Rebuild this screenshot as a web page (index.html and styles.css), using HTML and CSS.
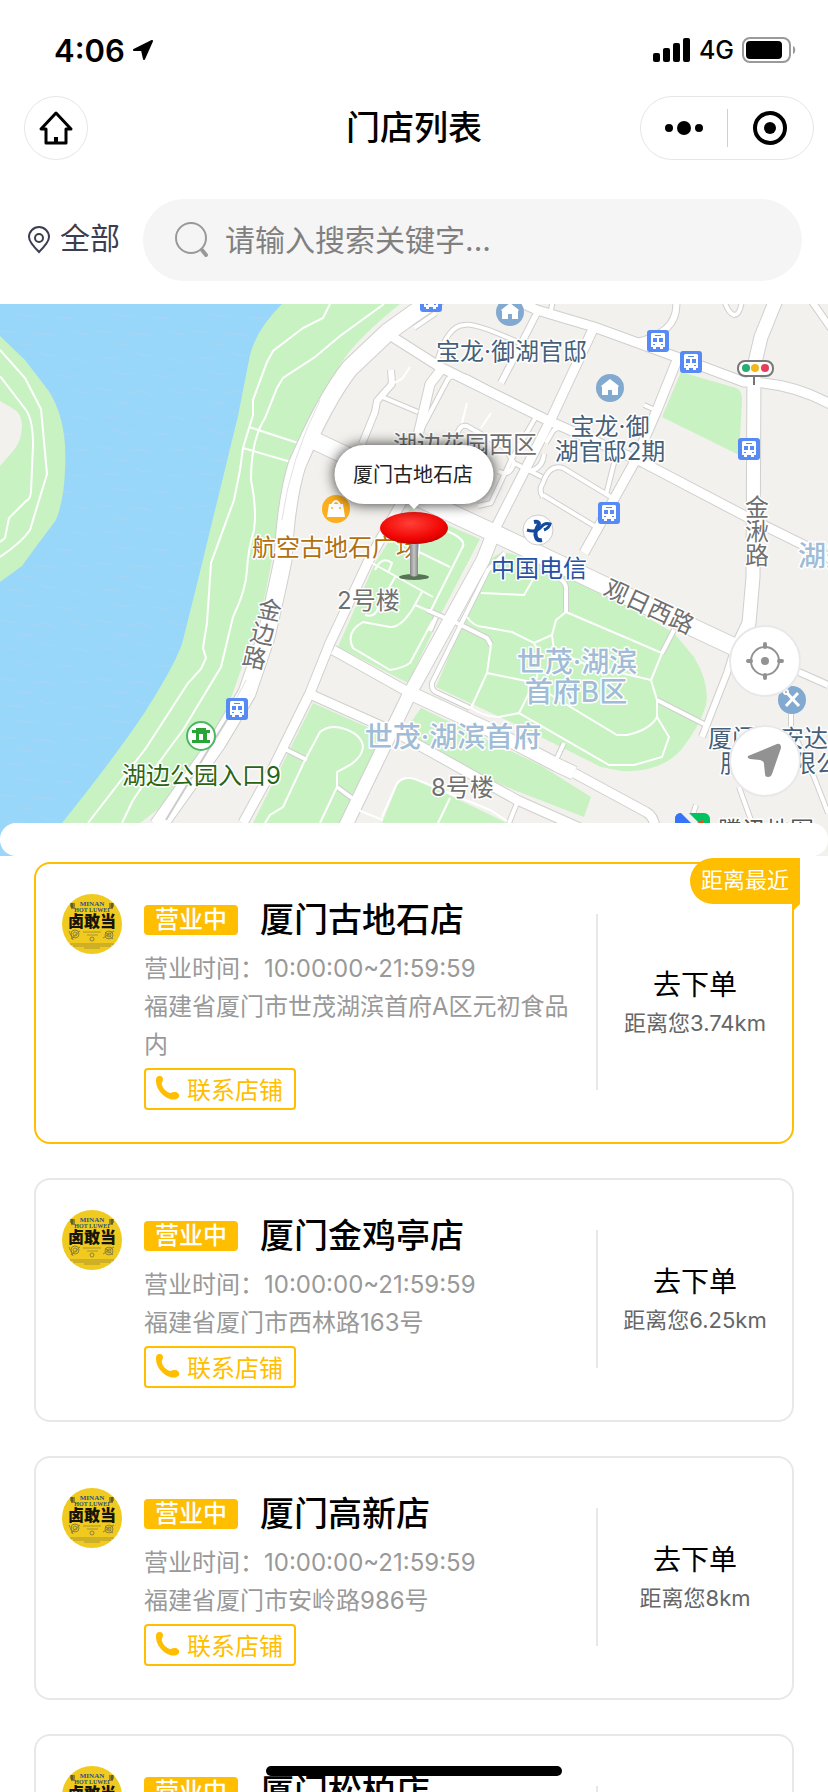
FILE: index.html
```html
<!DOCTYPE html>
<html lang="zh-CN">
  <head>
    <meta charset="utf-8">
    <meta name="viewport" content="width=device-width, initial-scale=1">
    <title>门店列表</title>
    <link rel="stylesheet" href="styles.css">
  </head>
  <body>
    <svg class="sprites" aria-hidden="true">
      <symbol id="logo" viewBox="0 0 60 60">
        <circle cx="30" cy="30" r="30" fill="#f1ca20"/>
        <g text-anchor="middle" font-family="Liberation Serif, serif" font-weight="700" font-size="7" fill="#29517f">
          <text x="30" y="12">MINAN</text>
          <text x="30" y="18" font-size="6">HOT LUWEI</text>
        </g>
        <path d="M8 10h5M8 12h5M9 14h4M10 9v5M47 10h5M47 12h5M47 14h4M50 9v5" stroke="#3b3a20" fill="none"/>
        <text x="30" y="33" text-anchor="middle" font-family="Noto Sans CJK SC, sans-serif" font-weight="900" font-size="16" fill="#15150c">卤敢当</text>
        <g fill="none" stroke="#8c8235">
          <circle cx="13" cy="40" r="4"/><circle cx="13" cy="40" r="2"/><path d="M7 37l4 9M9 45l9-8"/>
          <circle cx="47" cy="41" r="4"/><circle cx="47" cy="41" r="2"/><path d="M41 44l11-7M43 38l8 7"/>
          <circle cx="30" cy="45" r="2"/>
          <path d="M21 38h18M25 41h11M8 50h44M11 52h38M22 54h16" stroke-width=".7"/>
        </g>
      </symbol>
      <symbol id="phone" viewBox="0 0 24 24">
        <path fill="currentColor" d="M1 1C3-1 7 0 7 3c0 3-2 4-1 6 1 4 5 7 8 8 2 0 2-1 5-1 3 0 5 3 4 5-2 3-6 3-9 2C7 21 0 13 0 5c0-2 0-3 1-4z"/>
      </symbol>
      <symbol id="bus" viewBox="0 0 22 22">
        <rect width="22" height="22" rx="3" fill="#568af5"/>
        <path fill="#fff" d="M5 3h12l1 1v13h-2v2h-3v-2H9v2H6v-2H4V4z"/>
        <path fill="#568af5" d="M8 5h6v1H8zM6 8h4v4H6zM12 8h4v4h-4zM6 14h2v1H6zM14 14h2v1h-2z"/>
      </symbol>
      <symbol id="house" viewBox="0 0 28 28">
        <circle cx="14" cy="14" r="14" fill="#82a9cf"/>
        <path fill="#fff" d="M14 5l9 7-1 1v8h-6v-5h-4v5H6v-8l-1-1z"/>
      </symbol>
    </svg>

    <div class="status">
      <span class="time">4:06</span>
      <svg class="arrow" viewBox="0 0 22 22"><path d="M20 2L2 11h8l2 9z" stroke="#000" stroke-width="2" stroke-linejoin="round"/></svg>
      <span class="status-right">
        <svg width="38" height="24" viewBox="0 0 38 24"><rect y="15" width="7" height="9" rx="2"/><rect x="10" y="10" width="7" height="14" rx="2"/><rect x="20" y="5" width="7" height="19" rx="2"/><rect x="30" width="7" height="24" rx="2"/></svg>
        <span>4G</span>
        <svg width="54" height="26" viewBox="0 0 54 26"><rect x="1" y="1" width="47" height="24" rx="7" fill="none" stroke="#9a9a9a" stroke-width="2"/><rect x="4" y="4" width="36" height="18" rx="4"/><path d="M51 9c3 1 3 7 0 8z" fill="#9a9a9a"/></svg>
      </span>
    </div>

    <header class="nav">
      <button class="home" aria-label="首页">
        <svg width="36" height="36" viewBox="0 0 36 36" fill="none" stroke="#000" stroke-width="3" stroke-linejoin="round"><path d="M18 3L3 19h5v14h20V19h5z"/><path d="M18 27v5" stroke-width="4"/></svg>
      </button>
      <h1>门店列表</h1>
      <div class="capsule">
        <button aria-label="更多"><svg width="38" height="20" viewBox="0 0 38 20"><circle cx="4" cy="10" r="4"/><circle cx="19" cy="10" r="7"/><circle cx="34" cy="10" r="4"/></svg></button>
        <button aria-label="关闭"><svg width="36" height="36" viewBox="0 0 36 36"><circle cx="18" cy="18" r="15" fill="none" stroke="#000" stroke-width="4"/><circle cx="18" cy="18" r="6"/></svg></button>
      </div>
    </header>

    <div class="search">
      <a class="area" href="#">
        <svg width="24" height="28" viewBox="0 0 24 28" fill="none" stroke="#3d3d52" stroke-width="2"><path d="M12 26C6 20 2 15 2 11a10 10 0 0 1 20 0c0 4-4 9-10 15z"/><circle cx="12" cy="12" r="4"/></svg>
        <span>全部</span>
      </a>
      <label class="box">
        <svg width="34" height="36" viewBox="0 0 34 36" fill="none" stroke="#999"><circle cx="16" cy="16" r="15" stroke-width="2"/><path d="M27 28l4 5" stroke-width="4" stroke-linecap="round"/></svg>
        <input type="text" placeholder="请输入搜索关键字..." aria-label="搜索">
      </label>
    </div>

    <div class="map">
      <svg class="canvas" viewBox="0 304 828 552" preserveAspectRatio="xMidYMid slice">
        <defs>
          <pattern id="waves" width="96" height="58" patternUnits="userSpaceOnUse">
            <path d="M4 8q8 4 18 2M38 4q10 5 16 3M70 12q9-3 18 2M18 24q12 4 20 1M56 27q9 3 20 0M2 40q10 4 16 1M34 45q12-3 22 2M74 42q8 4 16 2M20 54q6 2 14 0" fill="none" stroke="#a9d4f4" stroke-width="1"/>
          </pattern>
          <radialGradient id="red" cx=".45" cy=".35" r=".65"><stop offset="0" stop-color="#ff4038"/><stop offset=".7" stop-color="#f20805"/><stop offset="1" stop-color="#cc0000"/></radialGradient>
          <linearGradient id="stem"><stop offset="0" stop-color="#888"/><stop offset=".5" stop-color="#c4c4c4"/><stop offset="1" stop-color="#888"/></linearGradient>
          <g id="streets">
            <path class="w4" d="M437 362Q447 326 464 325Q475 322 524 345M467 377L537 415L511 460L491 503L478 506M420 432L448 379Q453 374 467 377M457 436Q459 424 467 426L504 447L514 463L542 477M514 463Q510 478 498 471M543 497Q538 490 543 483Q549 464 563 468L611 497M543 495L596 527M614 463L606 495M546 443L553 431Q560 423 574 434L600 446M544 454Q543 468 530 471M644 405l9 4M553 300l-2 10M414 328L436 313"/>
            <path class="w4" d="M505 553L488 570L432 683Q431 691 438 693L470 708M380 396L418 412M283 748L307 760M337 787L352 798M541 570Q566 578 566 588V612M427 610L457 623L487 638L491 645M436 617l-6 14M674 630L662 653M657 700L706 725M564 743L557 758M517 803L509 823M739 787L752 823M791 710V727L814 777L828 813M696 805L690 823M724 300Q728 313 734 315Q740 315 742 300"/>
            <path class="w6" d="M391 370L392 384L377 401L375 412L362 444M537 313L501 383M734 650L727 673L702 737M780 665L801 673L828 685M676 300Q680 332 637 342M811 300L832 330"/>
            <path class="w9" d="M440 371L430 384L423 414L403 500L380 540L368 562L330 643L310 693L272 770L243 823M333 650L410 693M312 695L397 733L517 800L580 828M388 334L440 367L547 420L644 463L747 517L832 559M594 327L552 417L496 527M677 360L657 410L634 463L584 553M574 773L646 812Q654 816 655 828M515 300L537 310L594 327L704 367L744 382Q791 382 832 405"/>
            <path class="w12" d="M496 527L483 560L450 620L410 693L375 765L345 827M410 693L490 730L557 765L574 773M776 300L761 337L754 367L753 577L749 623L734 655"/>
            <path class="w16" d="M445 292L413 314L388 332L350 368Q326 398 297 465Q286 500 283 560Q279 580 266 637L247 693L217 743L158 826M313 440L345 455L423 500L494 533L574 571L694 628L745 652"/>
          </g>
        </defs>
        <path fill="#f2f1ed" d="M0 304h828v552H0z"/>
        <g id="water">
          <path class="water" d="M0 304H290L200 700L60 856H0z"/>
          <path fill="url(#waves)" d="M0 304H290L200 700L60 856H0z"/>
        </g>
        <g class="park">
          <path d="M282 304Q256 330 250 355L238 416L198 580L183 640Q179 658 145 712Q115 757 62 823H140L170 800L225 715L262 610L270 570L283 500Q288 450 305 430L340 365Q355 340 400 304z"/>
          <path d="M0 336L25 360L48 390Q68 420 65 470Q64 500 56 520L35 548L22 566L0 582z"/>
          <path d="M410 509L480 539L443 610L408 683L338 647L375 563z"/>
          <path d="M484 570Q495 548 512 554L564 570L674 633L694 657Q710 684 706 705Q700 726 681 750Q660 773 621 771L601 767L517 725L436 687L457 637z"/>
          <path d="M421 708L540 765L591 797L584 817L514 790L400 738z"/>
          <path d="M313 703L385 735L340 823H253z"/>
          <path d="M382 823L397 786Q405 774 420 781L507 823z"/>
          <path d="M681 372L736 388Q742 390 742 400L739 455L662 417z"/>
        </g>
        <path fill="#f2f1ed" d="M0 401L12 408Q22 413 22 425Q22 440 14 450L0 466z"/>
        <path class="trail" d="M0 350L25 378L41 409L47 474L30 530Q22 542 0 557M0 376L26 410Q33 420 33 445L31 492Q30 500 26 501L9 518L5 538L0 542"/>
        <path class="trail" d="M330 304L323 318L303 328L273 351L267 362L253 400V415L243 448L240 470L234 500L211 563L207 623L203 648L206 658L201 669L188 683L146 748L88 823M384 304L340 336L315 357L283 378L277 388L265 418Q251 440 251 480Q257 510 254 530Q248 550 247 570Q246 590 233 617L221 667L183 730Q155 767 133 800L122 823M249 427L298 443M243 448L291 462"/>
        <use href="#streets" class="edge"/>
        <use href="#streets" class="fill"/>
        <path fill="none" stroke="#ccc" stroke-width="2" d="M228 718L207 752L166 820"/>
        <path fill="none" stroke="#e2e2e2" d="M320 400Q290 460 282 520M246 680L233 705"/>
        <path class="trail" d="M392 384L402 379L410 367M467 403L462 423M491 413L481 428M412 610Q400 628 390 627L363 622Q345 632 353 648L390 670Q403 668 410 663L433 620M412 610L422 592M372 563L433 597M365 615Q375 618 378 608L395 577M447 531Q468 540 462 548L430 612M417 551L450 567M375 570Q382 555 392 563L388 573M415 605L427 610M491 645L487 673L471 708M481 593L524 595L534 578M467 617Q474 627 484 627L512 632L534 643L552 635L556 620L566 612L662 653L651 680L657 700V717L669 737L662 757L634 765H609L519 713L537 677L539 653L534 643M487 673L531 682M552 635L554 650L587 665L651 680M535 685L564 703L617 735H627Q650 730 657 717M471 708Q485 717 499 717L519 713"/>
        <path class="trail" d="M265 823L270 815L283 807L305 760L320 732Q330 724 345 729Q362 735 363 747Q362 757 350 765L337 772V787L320 823M358 810L383 820M382 817L397 783Q403 776 415 779L490 810L507 821M450 798L438 823"/>

        <g class="pois">
          <use href="#bus" x="420" y="290" width="22" height="22"/>
          <use href="#bus" x="647" y="330" width="22" height="22"/>
          <use href="#bus" x="680" y="351" width="22" height="22"/>
          <use href="#bus" x="738" y="438" width="22" height="22"/>
          <use href="#bus" x="598" y="502" width="22" height="22"/>
          <use href="#bus" x="226" y="698" width="22" height="22"/>
          <use href="#house" x="496" y="298" width="28" height="28"/>
          <use href="#house" x="596" y="374" width="28" height="28"/>
          <!-- mall -->
          <circle cx="336" cy="509" r="14" fill="#fcae1d"/>
          <path fill="#fff" d="M329 504h14l2 13h-18z"/><path d="M332 505q4-8 8 0" fill="none" stroke="#fff" stroke-width="2"/>
          <circle cx="332" cy="508" r="1" fill="#fcae1d"/><circle cx="340" cy="508" r="1" fill="#fcae1d"/>
          <!-- telecom -->
          <circle cx="538" cy="530" r="15" fill="#fff" stroke="#ccc"/>
          <path d="M527 530q9 3 14-3q4-5 9-3q-1 4-6 6" fill="none" stroke="#134a9e" stroke-width="3"/>
          <path d="M534 522q5-1 5 2q-5 8-3 13q1 4 6 3" fill="none" stroke="#134a9e" stroke-width="4"/>
          <!-- park gate -->
          <circle cx="201" cy="736" r="14" fill="#fff" stroke="#4fb764" stroke-width="2"/>
          <path fill="#27a636" d="M196 728h10v2h4v3h-3v7h3v3h-18v-3h4v-7h-4v-3h4zM199 734v6h4v-6z"/>
          <!-- repair shop -->
          <circle cx="792" cy="700" r="14" fill="#82a9cf"/>
          <path d="M787 693l12 13M798 693l-12 13" stroke="#fff" stroke-width="3"/><circle cx="786" cy="692" r="2" fill="none" stroke="#fff" stroke-width="2"/>
          <!-- traffic light -->
          <path d="M754 376v9" stroke="#777" stroke-width="2"/>
          <rect x="738" y="361" width="35" height="15" rx="7" fill="#fff" stroke="#777" stroke-width="2"/>
          <circle cx="746" cy="368" r="4" fill="#27ad70"/><circle cx="755" cy="368" r="4" fill="#f2b71d"/><circle cx="765" cy="368" r="4" fill="#e63e58"/>
        </g>

        <g class="labels">
          <text class="estate" x="436" y="360">宝龙·御湖官邸</text>
          <text class="estate mid" x="610" y="435">宝龙·御</text>
          <text class="estate mid" x="610" y="460">湖官邸2期</text>
          <text x="393" y="453">湖边花园西区</text>
          <text class="mall" x="252" y="556">航空古地石广场</text>
          <text x="337" y="609">2号楼</text>
          <text x="431" y="796">8号楼</text>
          <text class="gate" x="122" y="784">湖边公园入口9</text>
          <text class="telecom" x="491" y="577">中国电信</text>
          <text class="zone mid" x="577" y="672">世茂·湖滨</text>
          <text class="zone mid" x="576" y="702">首府B区</text>
          <text class="zone mid" x="453" y="747">世茂·湖滨首府</text>
          <text class="zone" x="798" y="566">湖美</text>
          <text class="estate" x="708" y="747">厦门永安达</text>
          <text class="estate" x="720" y="772">服务有限公</text>
          <text x="745 745 745" y="516 540 564">金湫路</text>
          <text transform="translate(256 616) rotate(12)">金</text>
          <text transform="translate(249 640) rotate(12)">边</text>
          <text transform="translate(241 664) rotate(12)">路</text>
          <text transform="translate(602 594) rotate(25)">观日西路</text>
          <text class="brand" x="718" y="839">腾讯地图</text>
        </g>
        <rect x="675" y="813" width="35" height="30" rx="6" fill="#00c261"/>
        <path d="M681 813h7l22 22v8h-35v-24q0-6 6-6z" fill="#3573fb"/>
        <path d="M681 813l8 0 12 12v8z" fill="#f2f1ed"/><path d="M697 823l6-3v8z" fill="#f54922"/>

        <!-- selected store -->
        <ellipse cx="414" cy="577" rx="15" ry="3" fill="#587356"/>
        <path fill="url(#stem)" d="M410 540h8v35q-4 3-8 0z"/>
        <ellipse cx="414" cy="528" rx="34" ry="16" fill="url(#red)"/>
        <path class="bubble" d="M364 445h100a29 29 0 0 1 0 59h-45l-5 5-5-5h-45a29 29 0 0 1 0-59z"/>
        <text class="pin-name" x="413" y="482">厦门古地石店</text>
      </svg>
      <div class="map-tools">
        <button aria-label="定位"><svg width="38" height="38" viewBox="0 0 38 38" fill="none" stroke="#929292"><circle cx="19" cy="19" r="14" stroke-width="2"/><circle cx="19" cy="19" r="4" fill="#929292" stroke="none"/><path d="M19 2v3M19 33v3M2 19h3M33 19h3" stroke-width="4" stroke-linecap="round"/></svg></button>
        <button aria-label="导航"><svg width="38" height="38" viewBox="0 0 38 38"><path fill="#929292" d="M31 2q4-1 4 4l-9 26q-1 3-4 3t-3-3l-1-10q0-3-4-4l-10-1q-3-1-2-3z"/></svg></button>
      </div>
      <div class="map-foot"></div>
    </div>

    <main class="stores">
      <article class="store nearest">
        <span class="badge">距离最近</span>
        <svg class="logo"><use href="#logo"/></svg>
        <div class="info">
          <div class="head"><span class="tag">营业中</span><h2>厦门古地石店</h2></div>
          <p>营业时间：10:00:00~21:59:59</p>
          <p>福建省厦门市世茂湖滨首府A区元初食品内</p>
          <button class="call"><svg><use href="#phone"/></svg>联系店铺</button>
        </div>
        <a class="order" href="#"><b>去下单</b><span>距离您3.74km</span></a>
      </article>
      <article class="store">
        <svg class="logo"><use href="#logo"/></svg>
        <div class="info">
          <div class="head"><span class="tag">营业中</span><h2>厦门金鸡亭店</h2></div>
          <p>营业时间：10:00:00~21:59:59</p>
          <p>福建省厦门市西林路163号</p>
          <button class="call"><svg><use href="#phone"/></svg>联系店铺</button>
        </div>
        <a class="order" href="#"><b>去下单</b><span>距离您6.25km</span></a>
      </article>
      <article class="store">
        <svg class="logo"><use href="#logo"/></svg>
        <div class="info">
          <div class="head"><span class="tag">营业中</span><h2>厦门高新店</h2></div>
          <p>营业时间：10:00:00~21:59:59</p>
          <p>福建省厦门市安岭路986号</p>
          <button class="call"><svg><use href="#phone"/></svg>联系店铺</button>
        </div>
        <a class="order" href="#"><b>去下单</b><span>距离您8km</span></a>
      </article>
      <article class="store">
        <svg class="logo"><use href="#logo"/></svg>
        <div class="info">
          <div class="head"><span class="tag">营业中</span><h2>厦门松柏店</h2></div>
        </div>
        <a class="order" href="#"></a>
      </article>
    </main>
    <div class="home-bar"></div>
  </body>
</html>
```
FILE: styles.css
```css
*{
  box-sizing:border-box;
}

body{
  display:flex;
  flex-direction:column;
  margin:0;
  height:100vh;
  overflow:hidden;
  background:#fff;
  color:#000;
  font-family:Inter,"Noto Sans CJK SC",sans-serif;
}

button{
  display:flex;
  align-items:center;
  justify-content:center;
  padding:0;
  border:0;
  background:none;
  font-family:inherit;
}

a{
  color:inherit;
  text-decoration:none;
}

h1,h2,p{
  margin:0;
}

.sprites{
  position:absolute;
  width:0;
  height:0;
}

/* status bar */
.status{
  display:flex;
  flex:none;
  align-items:center;
  height:88px;
  padding:12px 32px 0 54px;
}

.time{
  font-size:31px;
  font-weight:600;
}

.arrow{
  width:22px;
  height:22px;
  margin-left:7px;
}

.status-right{
  display:flex;
  align-items:center;
  gap:8px;
  margin-left:auto;
  font-size:25px;
  font-weight:500;
}

/* title bar */
.nav{
  display:grid;
  flex:none;
  grid-template-columns:1fr auto 1fr;
  align-items:center;
  height:80px;
  padding:0 14px;
}

.nav h1{
  font-size:34px;
  font-weight:500;
  line-height:48px;
}

.home{
  width:64px;
  height:64px;
  margin-left:10px;
  border:1px solid #e6e6e6;
  border-radius:50%;
}

.capsule{
  display:flex;
  justify-self:end;
  align-items:center;
  width:174px;
  height:64px;
  border:1px solid #e6e6e6;
  border-radius:32px;
}

.capsule button{
  flex:1;
  height:38px;
}

.capsule button + button{
  border-left:1px solid #d0d0d0;
}

/* search */
.search{
  display:flex;
  flex:none;
  align-items:center;
  height:136px;
  padding:8px 26px 0 27px;
}

.area{
  display:flex;
  align-items:center;
  gap:9px;
  width:116px;
  color:#3d3d52;
  font-size:30px;
}

.area span{
  height:40px;
  line-height:36px;
}

.box{
  display:flex;
  flex:1;
  align-items:center;
  gap:16px;
  height:82px;
  padding:0 32px;
  border-radius:41px;
  background:#f5f5f5;
}

.box input{
  flex:1;
  min-width:0;
  padding:0;
  border:0;
  outline:0;
  background:none;
  font-family:inherit;
  font-size:30px;
}

.box input::placeholder{
  color:#808080;
}

/* map */
.map{
  position:relative;
  flex:none;
  height:552px;
}

.canvas{
  display:block;
  width:100%;
  height:100%;
}

.water{
  fill:#98d7f9;
}

.park{
  fill:#c8f2c2;
}

.trail{
  fill:none;
  stroke:#fff;
  stroke-width:2px;
}

.edge,.fill{
  fill:none;
  stroke-linejoin:round;
}

.edge{
  --edge:2px;
  stroke:#cfcfcd;
}

.fill{
  --edge:0px;
  stroke:#fff;
}

.w4{
  stroke-width:calc(4px + var(--edge));
}

.w6{
  stroke-width:calc(6px + var(--edge));
}

.w9{
  stroke-width:calc(9px + var(--edge));
}

.w12{
  stroke-width:calc(13px + var(--edge));
}

.w16{
  stroke-width:calc(17px + var(--edge));
}

.labels{
  fill:#707070;
  stroke:#fff;
  stroke-width:3px;
  stroke-linejoin:round;
  paint-order:stroke;
  font-size:24px;
}

.mid{
  text-anchor:middle;
}

.estate{
  fill:#46607a;
}

.mall{
  fill:#b06f12;
}

.gate{
  fill:#2b6414;
}

.telecom{
  fill:#2450a6;
}

.zone{
  fill:#a0bcd6;
  font-size:28px;
  font-weight:500;
}

.brand{
  fill:#555;
}

.bubble{
  fill:#fff;
  filter:drop-shadow(0 0 7px rgba(0,0,0,.8));
}

.pin-name{
  fill:#222;
  font-size:20px;
  text-anchor:middle;
}

.map-tools{
  position:absolute;
  right:27px;
  bottom:59px;
  display:grid;
  gap:28px;
}

.map-tools button{
  width:72px;
  height:72px;
  border:2px solid #e8e8e8;
  border-radius:50%;
  background:#fff;
}

.map-foot{
  position:absolute;
  right:0;
  bottom:0;
  left:0;
  height:33px;
  border-radius:16px;
  background:#fff;
}

/* store list */
.stores{
  display:flex;
  flex:1;
  flex-direction:column;
  gap:34px;
  min-height:0;
  padding:6px 34px;
}

.store{
  position:relative;
  display:flex;
  flex:none;
  align-items:flex-start;
  padding:30px 0 32px 26px;
  border:2px solid #e8e8e8;
  border-radius:16px;
}

.nearest{
  border-color:#ffbe00;
}

.badge{
  position:absolute;
  top:-6px;
  right:-8px;
  height:46px;
  padding:0 11px;
  border-radius:23px 0 0 23px;
  background:#ffbe00;
  color:#fff;
  font-size:22px;
  line-height:44px;
}

.badge::after{
  content:"";
  position:absolute;
  top:100%;
  right:0;
  border-top:8px solid #ffbe00;
  border-right:8px solid transparent;
}

.logo{
  flex:none;
  width:60px;
  height:60px;
  margin-right:22px;
}

.info{
  flex:1;
  min-width:0;
  padding-right:16px;
}

.head{
  display:flex;
  align-items:center;
  gap:22px;
  height:54px;
  padding-bottom:2px;
}

.tag{
  height:30px;
  padding:0 11px;
  border-radius:4px;
  background:#ffbe00;
  color:#fff;
  font-size:24px;
  font-weight:500;
  line-height:30px;
}

.head h2{
  font-size:34px;
  font-weight:500;
  line-height:48px;
}

.info p{
  color:#999;
  font-size:24px;
  line-height:38px;
}

.info p:first-of-type{
  padding-top:2px;
}

.call{
  gap:7px;
  height:42px;
  margin-top:4px;
  padding:0 11px 2px 10px;
  border:2px solid #ffbe00;
  border-radius:4px;
  color:#ffbe00;
  font-size:24px;
}

.call svg{
  width:24px;
  height:24px;
}

.order{
  display:flex;
  flex:none;
  flex-direction:column;
  align-items:center;
  align-self:stretch;
  justify-content:center;
  width:196px;
  margin:20px 0;
  padding-top:4px;
  border-left:2px solid #e8e8e8;
}

.order b{
  font-size:28px;
  font-weight:400;
  line-height:38px;
}

.order span{
  color:#666;
  font-size:22px;
  line-height:38px;
}

.home-bar{
  position:fixed;
  right:0;
  bottom:16px;
  left:0;
  width:296px;
  height:10px;
  margin:0 auto;
  border-radius:5px;
  background:#000;
}
```
